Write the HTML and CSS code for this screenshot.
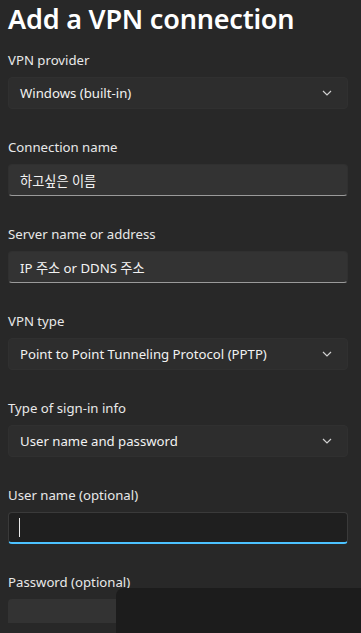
FILE: index.html
```html
<!DOCTYPE html>
<html>

<head>
    <title>Add a VPN connection</title>
    <link rel="stylesheet" href="styles.css">
</head>

<body>
    <div class="panel">
        <h1 class="title">Add a VPN connection</h1>

        <div class="field">
            <p class="label">VPN provider</p>
            <div class="box select">
                <span>Windows (built-in)</span>
                <svg class="chevron" width="10" height="6" viewBox="0 0 10 6"><path d="M1 1l4 4 4-4" fill="none" stroke="#d0d0d0" stroke-width="1.2"/></svg>
            </div>
        </div>

        <div class="field">
            <p class="label">Connection name</p>
            <div class="box input">
                <span>하고싶은 이름</span>
            </div>
        </div>

        <div class="field">
            <p class="label">Server name or address</p>
            <div class="box input">
                <span>IP 주소 or DDNS 주소</span>
            </div>
        </div>

        <div class="field">
            <p class="label">VPN type</p>
            <div class="box select">
                <span>Point to Point Tunneling Protocol (PPTP)</span>
                <svg class="chevron" width="10" height="6" viewBox="0 0 10 6"><path d="M1 1l4 4 4-4" fill="none" stroke="#d0d0d0" stroke-width="1.2"/></svg>
            </div>
        </div>

        <div class="field">
            <p class="label">Type of sign-in info</p>
            <div class="box select">
                <span>User name and password</span>
                <svg class="chevron" width="10" height="6" viewBox="0 0 10 6"><path d="M1 1l4 4 4-4" fill="none" stroke="#d0d0d0" stroke-width="1.2"/></svg>
            </div>
        </div>

        <div class="field">
            <p class="label">User name (optional)</p>
            <div class="box input focused">
                <span class="caret"></span>
            </div>
        </div>

        <div class="field">
            <p class="label">Password (optional)</p>
            <div class="box input cut"></div>
        </div>
    </div>

    <!-- window lying over the bottom of the dialog -->
    <div class="overlay"></div>
</body>

</html>
```

FILE: styles.css
```css
/* Page */
body {
    margin: 0;
    background-color: #282828;
    font-family: "Noto Sans", "Noto Sans CJK KR", sans-serif;
    color: #ffffff;
    height: 633px;
    overflow: hidden;
    position: relative;
}

.panel {
    padding: 0 13px 0 8px;
}

.title {
    margin: 0;
    height: 46px;
    font-size: 27px;
    font-weight: 600;
    line-height: 38px;
    letter-spacing: -0.2px;
}

/* Fields */
.field {
    height: 87px;
}

.label {
    margin: 0;
    height: 29px;
    padding-bottom: 2px;
    font-size: 13.2px;
    line-height: 29px;
    color: #e8e8e8;
}

.box {
    height: 32px;
    box-sizing: border-box;
    display: flex;
    align-items: center;
    justify-content: space-between;
    padding: 0 11px;
    border-radius: 4px;
    background-color: #2d2d2d;
    font-size: 13.2px;
    color: #f2f2f2;
    border: 1px solid #303030;
}

.select {
    padding-right: 15px;
}

.input {
    border-bottom: 1px solid #9a9a9a;
    background-color: #333333;
}

.focused {
    background-color: #1f1f1f;
    border: 1px solid #3a3a3a;
    border-bottom: 2px solid #4cc2ff;
}

.caret {
    width: 1px;
    height: 19px;
    background-color: #e8e8e8;
    margin-left: -1px;
}

.cut {
    height: 24px;
    border: none;
    border-radius: 4px 4px 0 0;
    background-color: #333333;
}

.chevron {
    display: block;
}

.overlay {
    position: absolute;
    left: 116px;
    top: 588px;
    right: 0;
    bottom: 0;
    background-color: #1c1c1c;
    border-top-left-radius: 8px;
}
```
